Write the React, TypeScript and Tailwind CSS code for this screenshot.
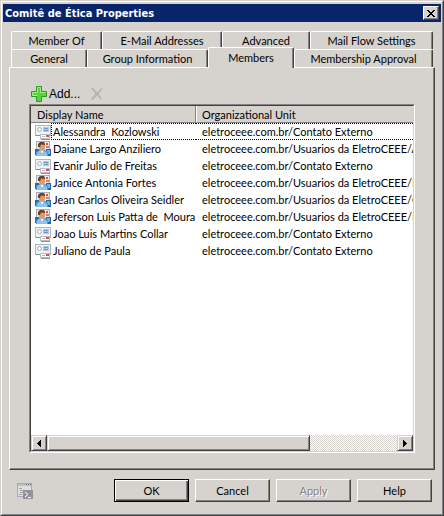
import React from "react";
import { clsx } from "clsx";

type Kind = "contact" | "user";

const members: { name: string; unit: string; kind: Kind }[] = [
  { name: "Alessandra  Kozlowski", unit: "eletroceee.com.br/Contato Externo", kind: "contact" },
  { name: "Daiane Largo Anziliero", unit: "eletroceee.com.br/Usuarios da EletroCEEE/A", kind: "user" },
  { name: "Evanir Julio de Freitas", unit: "eletroceee.com.br/Contato Externo", kind: "contact" },
  { name: "Janice Antonia Fortes", unit: "eletroceee.com.br/Usuarios da EletroCEEE/I", kind: "user" },
  { name: "Jean Carlos Oliveira Seidler", unit: "eletroceee.com.br/Usuarios da EletroCEEE/C", kind: "user" },
  { name: "Jeferson Luis Patta de  Moura", unit: "eletroceee.com.br/Usuarios da EletroCEEE/I", kind: "user" },
  { name: "Joao Luis Martins Collar", unit: "eletroceee.com.br/Contato Externo", kind: "contact" },
  { name: "Juliano de Paula", unit: "eletroceee.com.br/Contato Externo", kind: "contact" },
];

const raised =
  "border border-t-white border-l-white border-r-[#424142] border-b-[#424142] shadow-[inset_-1px_-1px_0_#848284]";
const scrollPiece =
  "border border-t-[#d6d3ce] border-l-[#d6d3ce] border-r-[#424142] border-b-[#424142] shadow-[inset_1px_1px_0_#fff,inset_-1px_-1px_0_#848284] bg-[#d6d3ce]";

function ContactIcon() {
  return (
    <svg width="16" height="16" viewBox="0 0 16 16" className="block shrink-0" aria-hidden="true">
      <rect x="0.5" y="1.5" width="15" height="10" fill="#edf3f6" stroke="#a9bbc2" />
      <rect x="1" y="11" width="14" height="1" fill="#7f9299" />
      <circle cx="4.5" cy="5.5" r="2" fill="#fff" stroke="#9db0ba" />
      <rect x="8" y="3" width="6" height="5" fill="#b4c8e4" />
      <rect x="9" y="4" width="4" height="1" fill="#7697ca" />
      <rect x="9" y="6" width="4" height="1" fill="#7697ca" />
      <rect x="5.5" y="10.5" width="9" height="4" fill="#fff" stroke="#b9bcc0" />
      <rect x="6" y="15" width="9" height="1" fill="#8d9296" />
      <rect x="11" y="11" width="3" height="2" fill="#df5148" />
      <rect x="7" y="12" width="3" height="1" fill="#b4b8c6" />
    </svg>
  );
}

function UserIcon() {
  return (
    <svg width="16" height="16" viewBox="0 0 16 16" className="block shrink-0" aria-hidden="true">
      <rect x="1.5" y="0.5" width="13" height="10" fill="#e8eaf0" stroke="#a7adb5" />
      <rect x="11" y="2" width="2" height="2" fill="#df5148" />
      <rect x="11" y="5" width="3" height="2" fill="#df7c70" />
      <rect x="0" y="8" width="4" height="6" fill="#2866aa" />
      <rect x="11" y="8" width="5" height="7" fill="#2866aa" />
      <rect x="12" y="9" width="3" height="4" fill="#75aee0" />
      <path d="M1 15V11L4 9H10L13 11V15Z" fill="#4f9ad4" />
      <path d="M2 12L4 10H5L7 13L9 10L12 12V15H2Z" fill="#8cc4ed" />
      <path d="M5 9H9L7 13Z" fill="#fff" />
      <rect x="4" y="1" width="6" height="9" rx="3" fill="#d99e65" />
      <path d="M3 6V3L5 1H9L10 3V4L6 3.500L5 6Z" fill="#65452f" />
    </svg>
  );
}

function PlusIcon() {
  return (
    <svg width="16" height="16" viewBox="0 0 16 16" aria-hidden="true">
      <path d="M5.500 0.500H10.500V5.500H15.500V10.500H10.500V15.500H5.500V10.500H0.500V5.500H5.500Z" fill="#5bd13b" stroke="#259c20" />
      <path d="M6.500 9.500V9.500H1.500V6.500H6.500V1.500H9.500V6.500H14.500" fill="none" stroke="#a5ee83" />
    </svg>
  );
}

function DeleteIcon() {
  return (
    <svg width="14" height="14" viewBox="0 0 14 14" aria-hidden="true">
      <path d="M1 1L3 1L7 5.500L11 1.500L13 1L8.500 7L12 12L11 12.500L7 8.500L2.500 13L1 12L5.500 7Z" fill="#b5b3b1" />
    </svg>
  );
}

function ScriptIcon() {
  return (
    <svg width="16" height="16" viewBox="0 0 16 16" aria-hidden="true">
      <rect x="0.5" y="0.5" width="14" height="13" fill="#dedde0" stroke="#aaa9b0" />
      <rect x="1" y="1" width="13" height="2" fill="#c1c0c6" />
      <path d="M9 1.500H10M11 1.500H12M13 1.500H14" stroke="#77757e" />
      <path d="M2 5.500H5M3 7.500H8M3 9.500H6M2 11.500H5" stroke="#a4a2aa" />
      <rect x="6" y="7" width="10" height="9" fill="#93929b" />
      <path d="M8 9L11 11.500L8 14M11 14.500H14" fill="none" stroke="#fff" />
    </svg>
  );
}

function Tab({ label, size, active }: { label: string; size: string; active?: boolean }) {
  return (
    <button
      type="button"
      role="tab"
      aria-selected={!!active}
      className={clsx(
        "grow whitespace-nowrap rounded-t-[2px] border-t border-r border-l border-t-white border-r-[#424142] border-l-white bg-[#d6d3ce] text-center shadow-[inset_-1px_0_0_#848284]",
        size,
        active ? "relative z-10 -mt-[2px] -mb-px h-[21px] pb-[2px]" : "h-[18px]",
      )}
    >
      {label}
    </button>
  );
}

function DialogButton({ label, primary, disabled }: { label: string; primary?: boolean; disabled?: boolean }) {
  return (
    <button
      type="button"
      disabled={disabled}
      className={clsx(
        "h-[23px] w-[75px]",
        primary
          ? "border border-black shadow-[inset_1px_1px_0_#fff,inset_-1px_-1px_0_#424142,inset_-2px_-2px_0_#848284]"
          : raised,
        disabled && "text-[#848284] [text-shadow:1px_1px_0_#fff]",
      )}
    >
      {label}
    </button>
  );
}

export default function App() {
  return (
    <div className="flex min-h-screen flex-col border border-t-[#d6d3ce] border-r-[#424142] border-b-[#424142] border-l-[#d6d3ce] bg-[#d6d3ce] font-[Lato,'Liberation_Sans',sans-serif] text-[11px] leading-[15px] text-black">
      <div className="flex flex-1 flex-col border border-t-white border-r-[#848284] border-b-[#848284] border-l-white px-px pt-[2px] pb-3">
        <header className="flex h-[18px] items-center justify-between bg-[#08246b] pr-[2px] pl-[2px]">
          <h1 className="font-['DejaVu_Sans_Condensed','DejaVu_Sans',sans-serif] text-[11px] font-bold text-white">
            Comitê de Ética Properties
          </h1>
          <button type="button" aria-label="Close" className={clsx("flex h-[14px] w-4 items-center justify-center bg-[#d6d3ce]", raised)}>
            <svg width="8" height="7" viewBox="0 0 8 7" shapeRendering="crispEdges" aria-hidden="true">
              <path d="M0 0h2v1h1v1h2v-1h1v-1h2v1h-1v1h-1v1h-1v1h1v1h1v1h1v1h-2v-1h-1v-1h-2v1h-1v1h-2v-1h1v-1h1v-1h1v-1h-1v-1h-1v-1h-1z" />
            </svg>
          </button>
        </header>

        <main className="mt-[9px] flex flex-1 flex-col px-[6px]">
          <div role="tablist" className="px-[2px]">
            <div className="flex">
              <Tab label="Member Of" size="basis-[91px]" />
              <Tab label="E-Mail Addresses" size="basis-[120px]" />
              <Tab label="Advanced" size="basis-[88px]" />
              <Tab label="Mail Flow Settings" size="basis-[123px]" />
            </div>
            <div className="flex">
              <Tab label="General" size="basis-[76px]" />
              <Tab label="Group Information" size="basis-[121px]" />
              <Tab label="Members" size="basis-[86px]" active />
              <Tab label="Membership Approval" size="basis-[139px]" />
            </div>
          </div>

          <section role="tabpanel" aria-label="Members" className={clsx("flex flex-1 flex-col px-[19px] pt-4 pb-4", raised)}>
            <div className="flex h-5 items-center gap-[10px] pl-[2px]">
              <button type="button" className="flex items-center gap-[2px] font-['Liberation_Sans',Arial,sans-serif] text-[12px]">
                <PlusIcon />
                Add...
              </button>
              <button type="button" disabled aria-label="Remove">
                <DeleteIcon />
              </button>
            </div>

            <div className="flex flex-1 flex-col border border-t-[#848284] border-r-white border-b-white border-l-[#848284]">
              <div className="flex flex-1 flex-col border border-t-[#424142] border-r-[#d6d3ce] border-b-[#d6d3ce] border-l-[#424142] bg-white">
                <div className="flex-1 overflow-hidden">
                  <table className="w-full table-fixed border-separate border-spacing-0">
                    <thead>
                      <tr className="h-[17px] bg-[#d6d3ce] text-left">
                        <th className="w-[165px] border-r border-b border-[#848284] p-0 pl-[6px] font-normal">Display Name</th>
                        <th className="border-b border-l border-b-[#848284] border-l-white p-0 pl-[5px] font-normal">
                          Organizational Unit
                        </th>
                      </tr>
                    </thead>
                    <tbody>
                      {members.map((m, i) => (
                        <tr key={m.name} className="h-[17px] whitespace-pre">
                          <td className="p-0">
                            <div className="flex h-[17px] items-center pl-1">
                              {m.kind === "contact" ? <ContactIcon /> : <UserIcon />}
                              <span
                                className={clsx(
                                  "flex h-[17px] flex-1 items-center border-y border-l pl-px",
                                  i === 0 ? "border-dotted border-black" : "border-transparent",
                                )}
                              >
                                {m.name}
                              </span>
                            </div>
                          </td>
                          <td className="overflow-hidden p-0">
                            <div
                              className={clsx(
                                "flex h-[17px] items-center border-y pl-[6px]",
                                i === 0 ? "border-dotted border-black" : "border-transparent",
                              )}
                            >
                              {m.unit}
                            </div>
                          </td>
                        </tr>
                      ))}
                    </tbody>
                  </table>
                </div>
                <div className="flex h-4 bg-[conic-gradient(#fff_25%,#d6d3ce_0_50%,#fff_0_75%,#d6d3ce_0)] bg-[length:2px_2px]">
                  <button type="button" aria-label="Scroll left" className={clsx("flex w-4 items-center justify-center", scrollPiece)}>
                    <svg width="4" height="7" viewBox="0 0 4 7" shapeRendering="crispEdges" aria-hidden="true">
                      <path d="M3 0h1v7h-1v-1h-1v-1h-1v-1h-1v-1h1v-1h1v-1h1z" />
                    </svg>
                  </button>
                  <div className={clsx("w-[263px]", scrollPiece)} />
                  <button type="button" aria-label="Scroll right" className={clsx("ml-auto flex w-4 items-center justify-center", scrollPiece)}>
                    <svg width="4" height="7" viewBox="0 0 4 7" shapeRendering="crispEdges" aria-hidden="true">
                      <path d="M0 0h1v1h1v1h1v1h1v1h-1v1h-1v1h-1v1h-1z" />
                    </svg>
                  </button>
                </div>
              </div>
            </div>
          </section>
        </main>

        <footer className="mt-[9px] flex items-center justify-between pr-[9px] pl-[14px]">
          <button type="button" aria-label="Show command">
            <ScriptIcon />
          </button>
          <div className="flex gap-[6px]">
            <DialogButton label="OK" primary />
            <DialogButton label="Cancel" />
            <DialogButton label="Apply" disabled />
            <DialogButton label="Help" />
          </div>
        </footer>
      </div>
    </div>
  );
}
